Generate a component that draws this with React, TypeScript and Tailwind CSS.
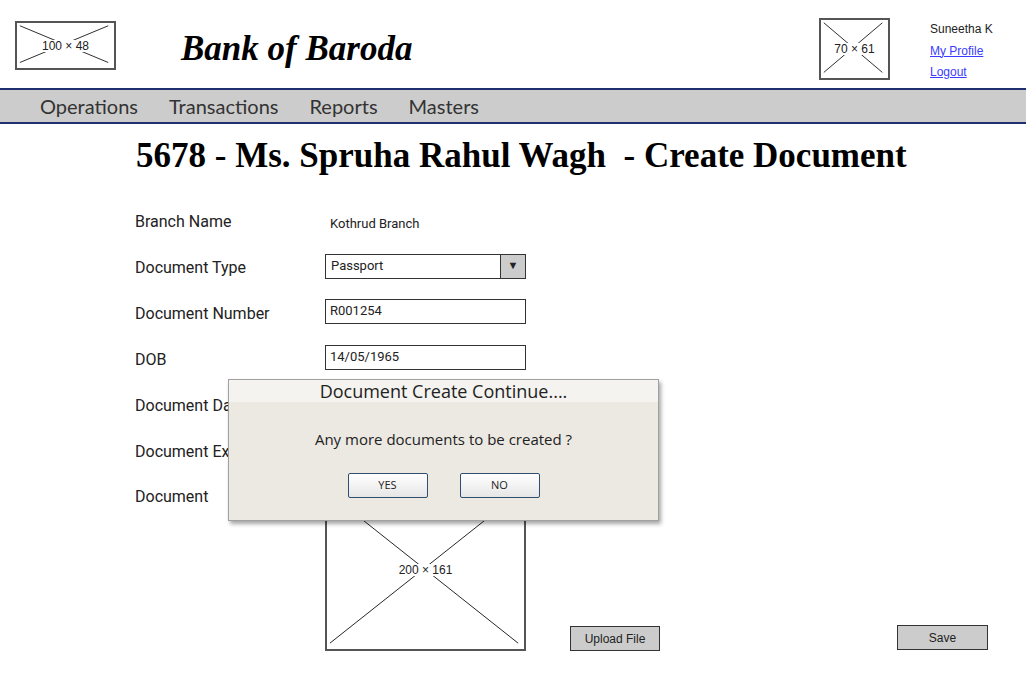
import React from 'react';

// Wireframe image placeholder: a box with an X across it and its size in the middle.
function Placeholder({ w, h, label, className = '' }: { w: number; h: number; label: string; className?: string }) {
  return (
    <div className={`relative border-2 border-[#555] bg-white ${className}`} style={{ width: w, height: h }}>
      <svg className="absolute inset-0 h-full w-full" viewBox={`0 0 ${w} ${h}`} preserveAspectRatio="none">
        <line x1="3" y1="3" x2={w - 6} y2={h - 6} stroke="#222" strokeWidth="1" />
        <line x1={w - 6} y1="3" x2="3" y2={h - 6} stroke="#222" strokeWidth="1" />
      </svg>
      <div className="absolute inset-0 flex items-center justify-center">
        <span className="bg-white px-[2px] text-[12px] leading-none text-[#222] font-['Liberation_Sans',sans-serif]">{label}</span>
      </div>
    </div>
  );
}

const FIELDS: { label: string; kind: 'text' | 'select' | 'input'; value: string }[] = [
  { label: 'Branch Name', kind: 'text', value: 'Kothrud Branch' },
  { label: 'Document Type', kind: 'select', value: 'Passport' },
  { label: 'Document Number', kind: 'input', value: 'R001254' },
  { label: 'DOB', kind: 'input', value: '14/05/1965' },
  { label: 'Document Date', kind: 'input', value: '' },
  { label: 'Document Expiry', kind: 'input', value: '' },
];

export default function App() {
  return (
    <div className="relative h-[700px] w-[1026px] overflow-hidden bg-white font-['Roboto',sans-serif] text-[#222]">
      {/* Header */}
      <div className="flex h-[88px]">
        <div className="flex w-[819px]">
          <Placeholder w={101} h={49} label="100 × 48" className="ml-[15px] mt-[21px]" />
          <h1 className="ml-[65px] mt-[27px] font-['Liberation_Serif',serif] text-[35px] font-bold italic leading-[44px] text-black">
            Bank of Baroda
          </h1>
        </div>
        <Placeholder w={71} h={62} label="70 × 61" className="mt-[18px]" />
        <div className="ml-[40px] mt-[19px] flex flex-col font-['Liberation_Sans',sans-serif] text-[12px] leading-[21.5px]">
          <span className="text-[#222]">Suneetha K</span>
          <a className="text-[#3b3bff] underline">My Profile</a>
          <a className="text-[#3b3bff] underline">Logout</a>
        </div>
      </div>

      {/* Nav bar */}
      <nav className="flex h-[36px] items-center gap-[31px] border-y-2 border-[#1f2f6f] bg-[#cccccc] pl-[40px] font-['Lato',sans-serif] text-[20px] text-[#333]">
        <span>Operations</span>
        <span>Transactions</span>
        <span>Reports</span>
        <span>Masters</span>
      </nav>

      {/* Page heading */}
      <h2 className="ml-[136px] mt-[12px] whitespace-pre font-['Liberation_Serif',serif] text-[35px] font-bold leading-[40px] text-black">
        {'5678 - Ms. Spruha Rahul Wagh  - Create Document'}
      </h2>

      {/* Form */}
      <div className="ml-[135px] mt-[23px] flex flex-col">
        {FIELDS.map((f) => (
          <div key={f.label} className="flex h-[46px] items-center">
            <span className="w-[190px] text-[16px]">{f.label}</span>
            {f.kind === 'text' && <span className="ml-[5px] mt-[4px] text-[13px]">{f.value}</span>}
            {f.kind === 'select' && (
              <div className="mt-[-4px] flex h-[25px] w-[201px] border border-[#333] bg-white text-[13px]">
                <span className="flex-1 pl-[5px] leading-[22px]">{f.value}</span>
                <span className="flex w-[25px] items-center justify-center border-l border-[#333] bg-[#cccccc] text-[11px]">▼</span>
              </div>
            )}
            {f.kind === 'input' && (
              <div className="mt-[-5px] h-[25px] w-[201px] border border-[#333] bg-white pl-[4px] text-[13px] leading-[22px]">{f.value}</div>
            )}
          </div>
        ))}
        <div className="mt-[14px] flex items-start">
          <span className="mt-[-4px] w-[190px] text-[16px]">Document</span>
          <Placeholder w={201} h={162} label="200 × 161" />
          <button className="ml-[44px] mt-[137px] h-[25px] w-[90px] border border-[#333] bg-[#cccccc] font-['Liberation_Sans',sans-serif] text-[12px]">
            Upload File
          </button>
          <button className="ml-[237px] mt-[136px] h-[25px] w-[91px] border border-[#333] bg-[#cccccc] font-['Liberation_Sans',sans-serif] text-[12px]">
            Save
          </button>
        </div>
      </div>

      {/* Modal dialog over the form */}
      <div className="absolute left-[228px] top-[379px] flex h-[142px] w-[431px] flex-col border border-[#a0a0a0] bg-[#ece9e3] font-['Open_Sans',sans-serif] shadow-[2px_3px_4px_rgba(0,0,0,0.35)]">
        <div className="flex h-[22px] items-center justify-center bg-[#f4f3ef] text-[18px] text-[#222]">
          Document Create Continue....
        </div>
        <p className="mt-[26px] text-center text-[15px]">Any more documents to be created ?</p>
        <div className="mt-[22px] flex justify-center gap-[32px]">
          <button className="h-[25px] w-[80px] rounded-[2px] border border-[#2f4f6f] bg-gradient-to-b from-white to-[#e6e6e6] text-[11px]">YES</button>
          <button className="h-[25px] w-[80px] rounded-[2px] border border-[#2f4f6f] bg-gradient-to-b from-white to-[#e6e6e6] text-[11px]">NO</button>
        </div>
      </div>
    </div>
  );
}
